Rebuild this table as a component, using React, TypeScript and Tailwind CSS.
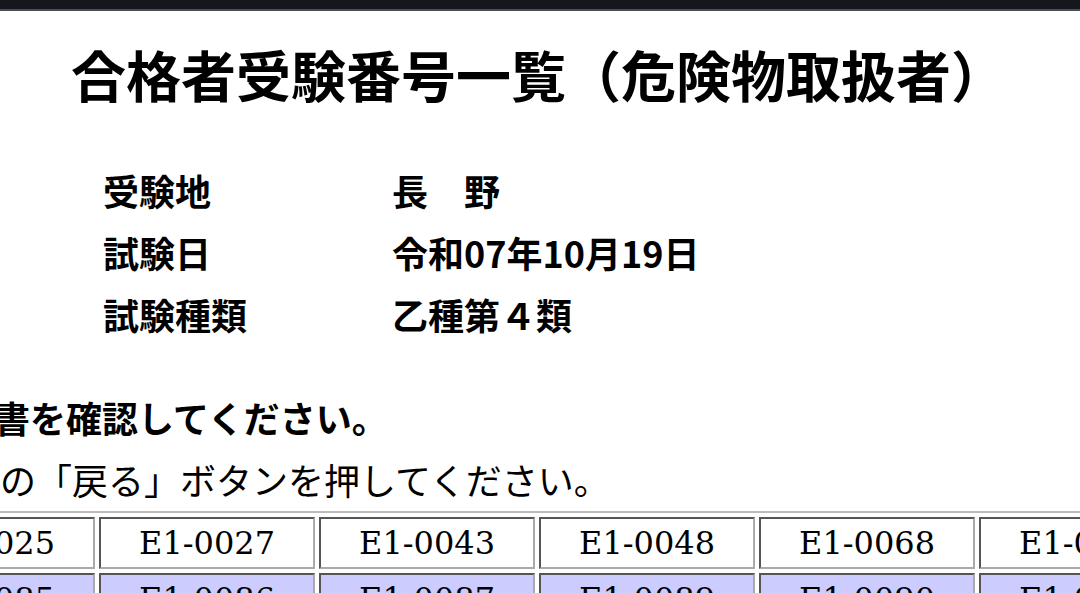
import React from "react";

const row1 = ["E1-0025", "E1-0027", "E1-0043", "E1-0048", "E1-0068", "E1-0070"];
const row2 = ["E1-0085", "E1-0086", "E1-0087", "E1-0089", "E1-0090", "E1-0091"];

const info: [string, string][] = [
  ["受験地", "長　野"],
  ["試験日", "令和07年10月19日"],
  ["試験種類", "乙種第４類"],
];

const cellCls =
  "w-[216px] min-w-[216px] h-[52px] p-0 text-center align-middle border-2 border-t-[#555] border-l-[#555] border-r-[#aaa] border-b-[#aaa] text-[32px] text-black [font-family:'DejaVu_Serif',serif] whitespace-nowrap";

export default function App() {
  return (
    <div className="w-[1080px] h-[593px] overflow-hidden bg-white text-black [font-family:'Noto_Sans_CJK_JP',sans-serif]">
      <div className="h-[9px] bg-[#16171c]" />
      <div className="h-[2px] bg-[#4a4f55]" />
      <h1 className="mt-[29px] pl-[71px] text-[55px] leading-[66px] font-bold whitespace-nowrap">
        合格者受験番号一覧（危険物取扱者）
      </h1>
      <div className="mt-[53px] pl-[103px] grid grid-cols-[289px_auto] text-[36px] leading-[62px] font-bold whitespace-nowrap">
        {info.map(([k, v]) => (
          <React.Fragment key={k}>
            <div>{k}</div>
            <div>{v}</div>
          </React.Fragment>
        ))}
      </div>
      <p className="mt-[41px] -ml-[6px] text-[36px] leading-[62px] font-bold whitespace-nowrap">
        書を確認してください。
      </p>
      <p className="text-[36px] leading-[62px] whitespace-nowrap">
        の「戻る」ボタンを押してください。
      </p>
      <table className="mt-[1px] w-max -ml-[127px] border-separate border-spacing-[4px] border-2 border-t-[#bbb] border-l-[#bbb] border-r-[#555] border-b-[#555]">
        <tbody>
          <tr>
            {row1.map((c) => (
              <td key={c} className={cellCls + " bg-white"}>
                {c}
              </td>
            ))}
          </tr>
          <tr>
            {row2.map((c) => (
              <td key={c} className={cellCls + " bg-[#ccccff]"}>
                {c}
              </td>
            ))}
          </tr>
        </tbody>
      </table>
    </div>
  );
}
